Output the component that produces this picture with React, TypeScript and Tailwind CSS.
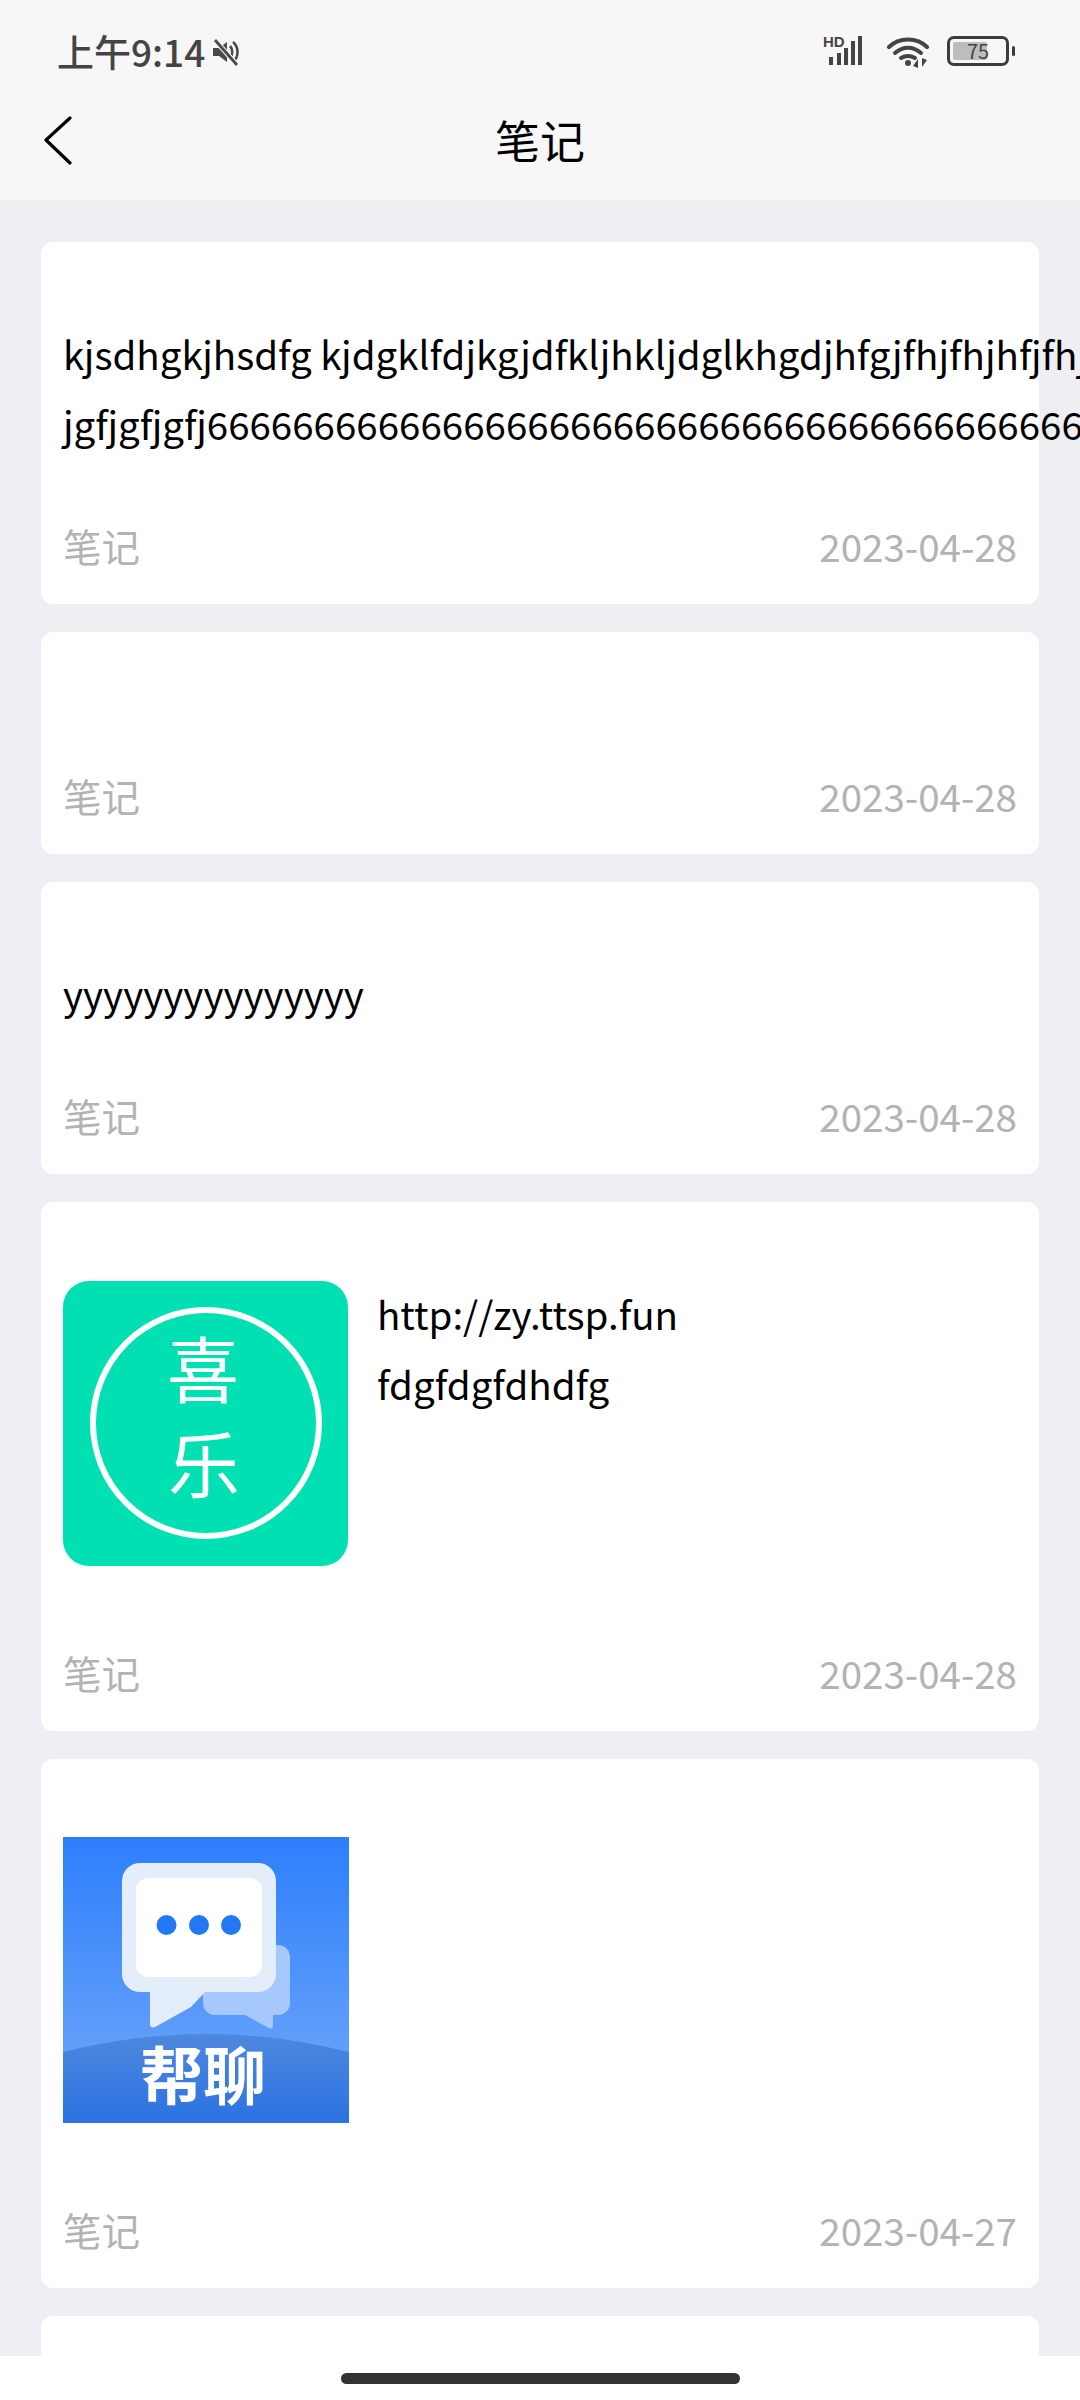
const FONT = "font-['Noto_Sans_CJK_SC','Noto_Sans',sans-serif]"

function StatusBar() {
  return (
    <div className="flex h-[90px] shrink-0 items-start justify-between pl-[57px] pr-[65px] pt-[29px]">
      <div className="flex items-center">
        <span className="text-[37px] leading-[45px] font-medium text-[#444444]">上午9:14</span>
        <svg width="28" height="28" viewBox="0 0 28 28" className="ml-[6px] text-[#4a4a4a]">
          <path d="M2 10h6l8-6v20l-8-6H2z" fill="currentColor" />
          <path d="M19 8c3 3 3 9 0 12M22 4c6 5 6 15 0 20" fill="none" stroke="currentColor" strokeWidth="2.6" />
          <path d="M4 2l22 25" stroke="#f7f7f8" strokeWidth="5" />
          <path d="M4 2l22 25" stroke="currentColor" strokeWidth="2.8" />
        </svg>
      </div>
      <div className="flex items-start pt-[7px]">
        <SignalIcon />
        <WifiIcon />
        <BatteryIcon />
      </div>
    </div>
  )
}

function SignalIcon() {
  return (
    <div className="relative mr-[24px] h-[30px] w-[40px]">
      <span className="absolute left-0 top-[-2px] text-[15px] leading-[15px] font-bold text-[#444444] font-['Liberation_Sans',sans-serif]">HD</span>
      <svg width="40" height="30" viewBox="0 0 40 30" className="text-[#444444]">
        <rect x="6" y="21" width="4" height="8" fill="currentColor" />
        <rect x="14" y="17" width="4" height="12" fill="currentColor" />
        <rect x="21" y="12" width="4" height="17" fill="currentColor" />
        <rect x="28" y="5" width="4" height="24" fill="currentColor" />
        <rect x="35" y="0" width="4" height="29" fill="currentColor" />
      </svg>
    </div>
  )
}

function WifiIcon() {
  return (
    <svg width="44" height="32" viewBox="0 0 44 32" fill="none" stroke="#444444" strokeWidth="4" strokeLinecap="round" className="mr-[16px]">
      <path d="M2 11C12 1 30 1 40 11" />
      <path d="M8 17c8-7 18-7 26 0" />
      <path d="M14 22c5-3 9-3 14 0" />
      <circle cx="21" cy="27" r="3" fill="#444444" stroke="none" />
      <path d="M31 32v-9l-5 7zM35 22v9l5-7z" fill="#444444" stroke="none" />
    </svg>
  )
}

function BatteryIcon() {
  return (
    <div className="flex items-center">
      <div className="relative flex h-[30px] w-[62px] items-center rounded-[7px] border-[3px] border-[#3c3c3c] p-[3px]">
        <div className="h-full w-[34px] rounded-[2px] bg-[#bdbdbd]" />
        <span className="absolute inset-0 text-center text-[20px] leading-[24px] text-[#444444]">75</span>
      </div>
      <div className="ml-[3px] h-[10px] w-[3px] rounded-full bg-[#3c3c3c]" />
    </div>
  )
}

function NavBar() {
  return (
    <div className="relative flex h-[110px] shrink-0 items-center justify-center pb-[10px]">
      <svg width="30" height="50" viewBox="0 0 30 50" fill="none" stroke="#000000" strokeWidth="3.2" strokeLinecap="round" strokeLinejoin="round" className="absolute left-[43px] top-[26px]">
        <path d="M27 2L3 24l24 23" />
      </svg>
      <span className="text-[45px] leading-[60px] text-black">笔记</span>
    </div>
  )
}

function XileLogo() {
  return (
    <svg width="285" height="285" viewBox="0 0 285 285" className="shrink-0">
      <rect width="285" height="285" rx="26" fill="#00e0b2" />
      <circle cx="143" cy="142" r="113" fill="none" stroke="#ffffff" strokeWidth="6" />
      <text x="140" y="116" textAnchor="middle" fontSize="72" fontWeight="400" fill="#ffffff">喜</text>
      <text x="141" y="211" textAnchor="middle" fontSize="72" fontWeight="400" fill="#ffffff">乐</text>
    </svg>
  )
}

function BangliaoLogo() {
  return (
    <svg width="286" height="286" viewBox="0 0 286 286" className="-mt-px shrink-0">
      <defs>
        <linearGradient id="sky" x1="0" y1="0" x2="0" y2="1">
          <stop offset="0" stopColor="#2c7ffb" />
          <stop offset="0.75" stopColor="#639ffa" />
        </linearGradient>
        <linearGradient id="hill" x1="0" y1="0" x2="0" y2="1">
          <stop offset="0" stopColor="#4d88de" />
          <stop offset="1" stopColor="#2b72e2" />
        </linearGradient>
      </defs>
      <rect width="286" height="286" fill="url(#sky)" />
      <rect x="140" y="108" width="87" height="70" rx="12" fill="#a6c8fc" />
      <path d="M182 178l24 13c2 1 4 0 4-2v-11z" fill="#a6c8fc" />
      <path d="M87 150v37c0 3 2 4 5 3l36-20 14-15z" fill="#e4eefb" />
      <rect x="59" y="26" width="154" height="129" rx="18" fill="#e4eefb" />
      <rect x="73" y="41" width="126" height="99" rx="12" fill="#ffffff" />
      <circle cx="103.5" cy="88" r="10" fill="#2379f3" />
      <circle cx="136" cy="88" r="10" fill="#2379f3" />
      <circle cx="168" cy="88" r="10" fill="#2379f3" />
      <path d="M0 215Q143 179 286 215V286H0z" fill="url(#hill)" />
      <text x="140" y="262" textAnchor="middle" fontSize="63" fontWeight="700" fill="#ffffff">帮聊</text>
    </svg>
  )
}

type Note = {
  lines?: string[]
  image?: React.ReactNode
  date?: string
}

const NOTES: Note[] = [
  {
    lines: [
      "kjsdhgkjhsdfg kjdgklfdjkgjdfkljhkljdglkhgdjhfgjfhjfhjhfjfhj",
      "jgfjgfjgfj66666666666666666666666666666666666666666666666666666",
    ],
    date: "2023-04-28",
  },
  { date: "2023-04-28" },
  { lines: ["yyyyyyyyyyyyyyy"], date: "2023-04-28" },
  { image: <XileLogo />, lines: ["http://zy.ttsp.fun", "fdgfdgfdhdfg"], date: "2023-04-28" },
  { image: <BangliaoLogo />, date: "2023-04-27" },
  {},
]

function NoteCard({ note }: { note: Note }) {
  return (
    <div className="flex shrink-0 flex-col rounded-[12px] bg-white pb-[33px] pl-[22px] pr-[22px] pt-[79px]">
      {note.image ? (
        <div className="flex gap-[29px] pb-[22px]">
          {note.image}
          <div className="-mt-[3px] whitespace-nowrap text-[38.5px] leading-[70px] text-black">
            {note.lines?.map((l) => <div key={l}>{l}</div>)}
          </div>
        </div>
      ) : (
        note.lines && (
          <div className="-mt-[3px] mb-[3px] whitespace-nowrap text-[38.5px] leading-[70px] text-black">
            {note.lines.map((l) => <div key={l}>{l}</div>)}
          </div>
        )
      )}
      <div className="mt-[58px] flex items-center justify-between text-[38.5px] leading-[52px] text-[#b3b3b3]">
        <span>笔记</span>
        <span>{note.date}</span>
      </div>
    </div>
  )
}

export default function App() {
  return (
    <div className={`flex h-[2400px] w-[1080px] flex-col overflow-hidden bg-[#eeeef3] ${FONT}`}>
      <header className="flex h-[200px] shrink-0 flex-col bg-[#f7f7f8]">
        <StatusBar />
        <NavBar />
      </header>
      <main className="flex min-h-0 flex-1 flex-col gap-[28px] overflow-hidden px-[41px] pt-[42px]">
        {NOTES.map((n, i) => (
          <NoteCard key={i} note={n} />
        ))}
      </main>
      <footer className="flex h-[44px] shrink-0 items-start justify-center bg-white pt-[17px]">
        <div className="h-[11px] w-[399px] rounded-full bg-[#333333]" />
      </footer>
    </div>
  )
}
